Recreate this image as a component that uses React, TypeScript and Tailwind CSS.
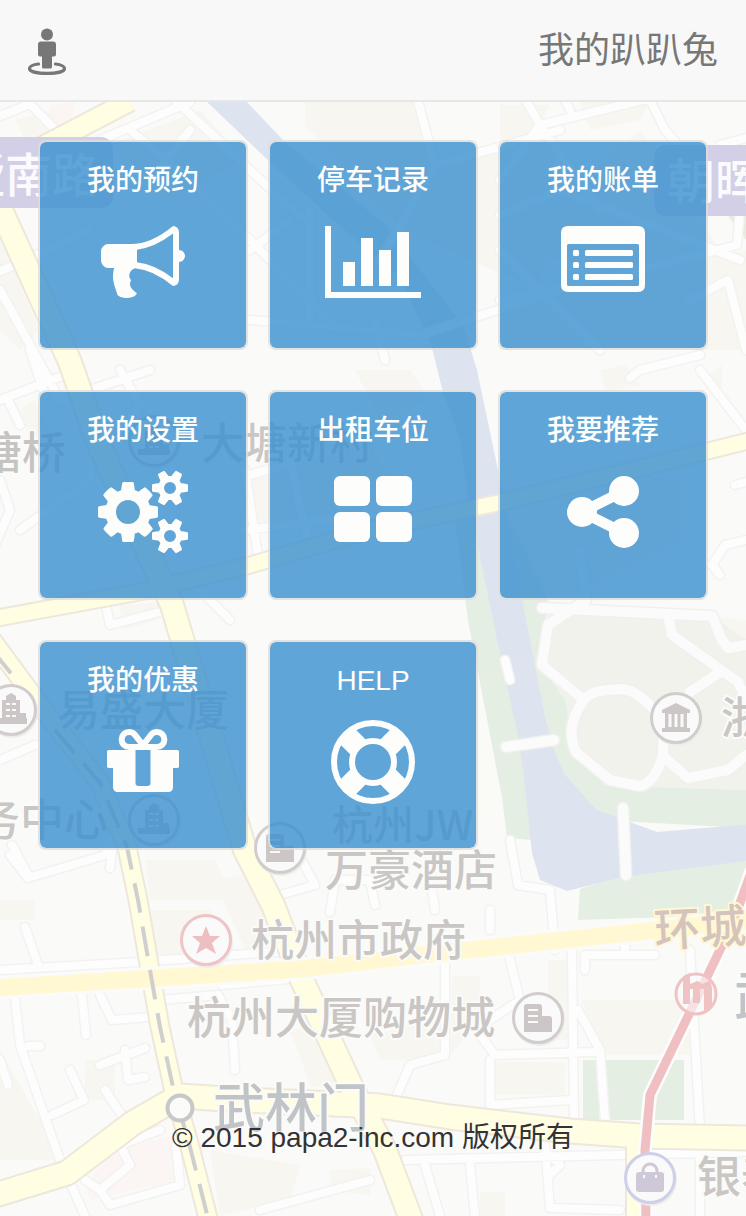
import type { ReactNode } from "react";

type Label = { x: number; y: number; text: string; size?: number; fill?: string; halo?: string; rotate?: number };

const minorRoads = [
  "M-10 120L30 104M30 104L75 150M100 140L190 102M130 130L190 180L340 330",
  "M150 180L190 130M175 100L250 170L310 225M250 250L290 220",
  "M415 90L435 165L560 130M435 165L380 260",
  "M500 180L540 125L746 75M540 125L600 210M520 90L540 125M560 90L570 110M650 100L665 130L700 170L740 210L737 245L640 270L500 300",
  "M500 215L560 190L740 260M690 300L728 280L746 350M500 250L600 350",
  "M720 145L746 138M720 160L728 180",
  "M-10 275L15 265L90 230M0 290L60 400L150 370M0 400L65 375",
  "M30 350L45 395M8 400L20 425M120 370L140 405L120 430",
  "M250 320L420 335L560 290M310 210L310 320M375 320L385 360",
  "M0 480L10 510L-5 545M20 530L90 480L95 440",
  "M250 475L400 430M245 470L258 555M290 460L310 550M245 530L370 515",
  "M630 378L640 370L700 355M700 370L746 430M735 485L746 482M720 575L712 565L725 545L746 540",
  "M105 600L110 625L160 612M200 590L230 620",
  "M0 760L35 745M10 855L28 878L105 855L115 830M12 845L28 875M112 850L110 868",
  "M0 970L140 962L300 950M25 927L38 965M15 998L20 1045L60 1160L85 1216",
  "M82 995L86 1035M100 995L112 1020L150 1017M28 1046L40 1046M0 1060L8 1085",
  "M52 1115L84 1100L70 1070M125 1120L105 1090M100 1065L145 1048M145 1077L128 1080L125 1050",
  "M85 1180L100 1190L130 1165L120 1145L160 1130M100 1190L110 1205L180 1185L176 1145",
  "M235 1070L232 1020L218 995L160 1000M260 1210L370 1180M222 985L300 978",
  "M286 830L315 885L280 895M330 912L335 880L370 880L375 905M430 875L435 910",
  "M490 910L490 930M510 840L518 885L550 890L555 950",
  "M445 960L445 1055L410 1065L397 1095M510 960L520 1000L490 1020",
  "M480 1035L495 1055L595 1052M572 950L574 1120M578 1010L600 1050L605 1120",
  "M585 970L585 955L655 955M625 945L625 955M490 1060L490 1105L570 1100M690 950L700 1130L700 1216",
  "M405 1160L746 1152M425 1165L440 1216M470 1165L475 1216M545 1145L550 1208L620 1210M550 1155L560 1165L550 1175",
  "M505 660L510 680",
];

const parkRoads = [
  "M542 608L712 616L722 640L728 648L746 645M580 550L586 600L548 625L542 665L584 700",
  "M584 700C592 690 605 690 622 689C636 690 650 703 664 722L663 755C657 775 650 784 640 786L610 780L576 752C570 738 568 722 584 700Z",
  "M668 615L672 635L738 682L746 700M722 671L690 692M664 757L688 778L728 770L746 755",
  "M506 747L554 740M623 808L626 875",
];

const yellowRoads = [
  { d: "M40 148L130 101", w: 19 },
  { d: "M-8 190L70 362L97 440L172 605L245 850L273 905L302 980L353 1090L385 1150L412 1222", w: 22 },
  { d: "M-8 640L40 705L100 783L127 847L138 900L150 970L160 1027L173 1087L190 1147L209 1222", w: 17 },
  { d: "M-8 619L150 590L250 565L370 530L498 503L620 473L752 440", w: 15 },
  { d: "M-8 1196L67 1173L133 1123L180 1096L240 1100L380 1106L450 1117L570 1131L640 1136L752 1138", w: 23 },
  { d: "M635 1136L635 1222", w: 16 },
];

const blocks = [
  "M15 120L70 105L75 130L30 150Z M305 90H420L435 165L560 120L540 290L400 230L305 125Z",
  "M110 145L200 110L245 160L170 200Z M500 105H550L520 160L500 165Z M580 100H650L640 120L590 130Z",
  "M0 240L40 330L20 350L0 330Z M600 60H746V90Z M640 130L720 250L640 275L500 250Z M500 305L746 250V350H500Z",
  "M20 410L35 400L50 430L30 440Z M250 480L370 440L400 500L250 535Z M355 370H410L430 400L380 420Z",
  "M120 605L160 602L158 620L122 630Z M540 600L746 620V790L650 788L590 775L545 680Z",
  "M600 370L625 365L640 385L605 392Z M700 380L722 365V400Z M500 500L600 465L680 480V540L560 600L510 570Z",
  "M0 900H35V920H0Z M150 910H210L240 960H155Z M145 860H215L235 900H150Z M215 880L260 870L290 950H245Z",
  "M85 1060H115V1100H85Z M0 1050L40 1120L60 1160H0Z M290 1030L320 1025L350 1095L310 1085Z",
  "M210 1150L300 1165L290 1200L220 1216Z M330 1170L370 1168V1195L330 1190Z",
  "M452 976H480V1020L450 1055Z M495 1062H565V1095H492Z M582 1000H690V1055H600Z M370 1035L440 1020V1060H380Z",
  "M480 1192H505V1216H480Z M548 960H570V1040H548Z",
];

const labels: Label[] = [
  { x: -42, y: 192, text: "墅南路", size: 47, fill: "#fbfbfe", halo: "#d2cfe7" },
  { x: 667, y: 199, text: "朝晖", size: 48, fill: "#fbfbfe", halo: "#d2cfe7" },
  { x: -22, y: 469, text: "塘桥", fill: "#c5c4c3" },
  { x: 201, y: 459, text: "大塘新村", size: 43 },
  { x: 57, y: 726, text: "易盛大厦", size: 43 },
  { x: -24, y: 836, text: "务中心" },
  { x: 332, y: 840, text: "杭州JW", size: 41 },
  { x: 325, y: 886, text: "万豪酒店", size: 43 },
  { x: 721, y: 734, text: "浙江" },
  { x: 251, y: 956, text: "杭州市政府", size: 43 },
  { x: 187, y: 1034, text: "杭州大厦购物城" },
  { x: 213, y: 1127, text: "武林门", size: 52, fill: "#c1c4c6" },
  { x: 734, y: 1015, text: "武林", size: 52, fill: "#c1c4c6" },
  { x: 697, y: 1193, text: "银泰" },
  { x: 655, y: 947, text: "环城", size: 46, fill: "#d5c4bd", halo: "#fff8d2", rotate: -3 },
];

function Poi({ x, y, stroke = "#d2cdcd", children }: { x: number; y: number; stroke?: string; children: ReactNode }) {
  return (
    <g transform={`translate(${x} ${y})`} fill="#ccc7c6">
      <circle cx="1" cy="2" r="26" fill="#ededec" />
      <circle r="24.500" fill="#fafafa" stroke={stroke} strokeWidth="3" />
      {children}
    </g>
  );
}

function Tower() {
  return (
    <>
      <path d="M-16 14V8H-9V-10H-5V-14L0-17L5-14V-10H9V3H15V8H16V14Z" />
      <path d="M-5-6H-1M1-6H5M-5 0H-1M1 0H5M-5 6H-1M1 6H5" stroke="#fafafa" strokeWidth="2" />
    </>
  );
}

function Shop() {
  return (
    <>
      <path d="M-14 14V-11Q-14-14-11-14H1Q4-14 4-11V-2H11Q14-2 14 1V14Z" />
      <path d="M-10-8H0M-10-2H0M-10 4H0" stroke="#fafafa" strokeWidth="2" />
    </>
  );
}

function CityMap() {
  return (
    <svg
      aria-hidden="true"
      className="absolute inset-0 -z-10 h-full w-full"
      viewBox="0 0 746 1216"
      preserveAspectRatio="xMidYMin slice"
      fill="none"
      strokeLinejoin="round"
    >
      <rect width="746" height="1216" fill="#fafaf8" />
      <path d={blocks.join(" ")} fill="#f7f6f1" />
      <path d="M548 608L712 616L746 640V790L650 787L590 770L545 680Z" fill="#f2f2ec" />
      <path d="M115 1150L175 1135L178 1180L90 1200L85 1185Z M50 105L75 102L70 125L55 128Z" fill="#fbf5f4" />
      <path d="M250 700L470 650L500 800L480 820L250 790Z" fill="#fafaf7" />
      <path
        d="M453 505L468 620L502 797L507 838L532 840L600 820L746 828V790L650 787L605 785L572 740L565 700L540 665L548 600L515 530L500 500Z M580 889L578 920L730 915L746 890V856L640 870Z M583 1060H684V1120H583Z"
        fill="#e5eee3"
      />
      <path d="M720 205L746 215V240L735 225Z" fill="#e8ebde" />
      <path
        d="M205 100H245L283 140L383 223L463 325L477 370L498 470L510 530L526 620L545 717L555 753L565 775L597 810L657 832L752 824V860L623 877L567 891L540 880L532 853L523 770L518 737L497 640L467 493L460 440L443 392L432 348L400 277L333 220L270 162Z"
        fill="#dde4f0"
      />
      <g strokeLinecap="round">
        <path d={minorRoads.join("")} stroke="#f2f2f1" strokeWidth="11" />
        <path d={minorRoads.join("")} stroke="#fdfdfd" strokeWidth="8" />
        <path d={parkRoads.join("")} stroke="#f0f0ee" strokeWidth="13" />
        <path d={parkRoads.join("")} stroke="#fbfbfb" strokeWidth="10" />
      </g>
      {yellowRoads.map((r) => (
        <path key={r.d} d={r.d} stroke="#eee7dc" strokeWidth={r.w + 4} />
      ))}
      {yellowRoads.map((r) => (
        <path key={r.d} d={r.d} stroke="#fffde2" strokeWidth={r.w} />
      ))}
      <path d="M-8 988L140 979L300 969L420 955L657 930L752 920" stroke="#fbfbf9" strokeWidth="23" />
      <path d="M-8 988L140 979L300 969L420 955L657 930L752 920" stroke="#fff8d2" strokeWidth="17" />
      <path
        d="M-8 650L18 682M55 730L100 783L127 847L138 900L150 970L160 1027L173 1087L190 1147L209 1222"
        stroke="#cfcfd0"
        strokeWidth="4"
        strokeDasharray="30 14"
      />
      <path d="M752 870L732 925L650 1095L645 1150L646 1222" stroke="#fdfdfd" strokeWidth="14" />
      <path d="M752 870L732 925L650 1095L645 1150L646 1222" stroke="#f0bfc2" strokeWidth="9" />
      <rect x="-20" y="137" width="133" height="71" rx="12" fill="#d2cfe7" />
      <rect x="654" y="145" width="120" height="71" rx="12" fill="#d2cfe7" />
      <circle cx="180" cy="1108" r="12.500" fill="#fbfbfa" stroke="#c6c8c9" strokeWidth="4" />

      <Poi x={11} y={710}><Tower /></Poi>
      <Poi x={154} y={820}><Tower /></Poi>
      <Poi x={154} y={441}><Tower /></Poi>
      <Poi x={280} y={848}><Shop /></Poi>
      <Poi x={538} y={1018}><Shop /></Poi>
      <Poi x={676} y={718}>
        <path d="M-14-8L0-15L14-8V-5H11V10H14V14H-14V10H-11V-5H-14Z" />
        <path d="M-6-4V9M0-4V9M6-4V9" stroke="#fafafa" strokeWidth="3" />
      </Poi>
      <Poi x={206} y={940} stroke="#eec4c6">
        <path d="M0-14L4-4H14L6 3L10 14L0 8L-10 14L-6 3L-14-4H-4Z" fill="#edbfc2" />
      </Poi>
      <Poi x={650} y={1178} stroke="#cdd0e8">
        <rect x="-14" y="-6" width="28" height="20" rx="3" fill="#cec8d8" />
        <path d="M-7-5V-7A7 7 0 0 1 7-7V-5" fill="none" stroke="#cec8d8" strokeWidth="3" />
        <path d="M-6-3V0M6-3V0" stroke="#fafafa" strokeWidth="2" />
      </Poi>
      <circle cx="696" cy="994" r="20" fill="#fafafa" fillOpacity="0.6" stroke="#efc2c4" strokeWidth="3" />
      <path d="M683 976L690 973V984L698 981L702 984L709 981Q712 983 712 990V1005L704 1013V989H700V1003H693V989H690V1004H683Z" fill="#efc2c4" />

      <g fontFamily='"Noto Sans CJK SC", sans-serif' fontWeight="500" strokeWidth="4" paintOrder="stroke">
        {labels.map((l) => (
          <text
            key={`${l.x}-${l.y}`}
            x={l.x}
            y={l.y}
            fontSize={l.size ?? 44}
            fill={l.fill ?? "#c9c6c4"}
            stroke={l.halo ?? "#fbfbfa"}
            transform={l.rotate ? `rotate(${l.rotate} ${l.x} ${l.y})` : undefined}
          >
            {l.text}
          </text>
        ))}
      </g>
    </svg>
  );
}

function Glyph({ width = 1792, d }: { width?: number; d: string }) {
  return (
    <svg aria-hidden="true" className="h-[84px] w-auto" viewBox={`0 0 ${width} 1792`} fill="currentColor">
      <path d={d} />
    </svg>
  );
}

const bullhorn =
  "M1664 640q53 0 90.5 37.5t37.5 90.5-37.5 90.5-90.500 37.500v384q0 52-38 90t-90 38q-417-347-812-380-58 19-91 66t-31 100.500 40 92.500q-20 33-23 65.500t6 58 33.500 55 48 50 61.500 50.500q-29 58-111.500 83t-168.500 11.500-132-55.500q-7-23-29.500-87.500t-32-94.500-23-89-15-101 3.500-98.500 22-110.500h-122q-66 0-113-47t-47-113v-192q0-66 47-113t113-47h480q435 0 896-384 52 0 90 38t38 90v384zm-128 604v-954q-394 302-768 343v270q377 42 768 341z";
const barChart =
  "M640 896v512h-256v-512h256zm384-512v1024h-256v-1024h256zm1024 1152v128h-2048v-1536h128v1408h1920zm-640-896v768h-256v-768h256zm384-384v1152h-256v-1152h256z";
const smallGear =
  "v140q0 16-149 31-12 27-30 52 51 113 51 138 0 4-4 7-122 71-124 71-8 0-46-47t-52-68q-20 2-30 2t-30-2q-14 21-52 68t-46 47q-2 0-124-71-4-3-4-7 0-25 51-138-18-25-30-52-149-15-149-31v-140q0-16 149-31 13-29 30-52-51-113-51-138 0-4 4-7 4-2 35-20t59-34 30-16q8 0 46 46.500t52 67.500q20-2 30-2t30 2q51-71 92-112l6-2q4 0 124 70 4 3 4 7 0 25-51 138 17 23 30 52 149 15 149 31z";
const gears =
  "M896 896q0-106-75-181t-181-75-181 75-75 181 75 181 181 75 181-75 75-181zm768 512q0-52-38-90t-90-38-90 38-38 90q0 53 37.500 90.500t90.500 37.500 90.500-37.500 37.500-90.500zm0-1024q0-52-38-90t-90-38-90 38-38 90q0 53 37.500 90.500t90.500 37.500 90.500-37.500 37.500-90.500zm-384 421v185q0 10-7 19.500t-16 10.500l-155 24q-11 35-32 76 34 48 90 115 7 11 7 20 0 12-7 19-23 30-82.500 89.500t-78.500 59.500q-11 0-21-7l-115-90q-37 19-77 31-11 108-23 155-7 24-30 24h-186q-11 0-20-7.500t-10-17.500l-23-153q-34-10-75-31l-118 89q-7 7-20 7-11 0-21-8-144-133-144-160 0-9 7-19 10-14 41-53t47-61q-23-44-35-82l-152-24q-10-1-17-9.500t-7-19.500v-185q0-10 7-19.500t16-10.500l155-24q11-35 32-76-34-48-90-115-7-11-7-20 0-12 7-20 22-30 82-89t79-59q11 0 21 7l115 90q34-18 77-32 11-108 23-154 7-24 30-24h186q11 0 20 7.500t10 17.500l23 153q34 10 75 31l118-89q8-7 20-7 11 0 21 8 144 133 144 160 0 8-7 19-12 16-42 54t-45 60q23 48 34 82l152 23q10 2 17 10.500t7 19.500z" +
  "M1920 1338" + smallGear + "M1920 314" + smallGear;
const gift =
  "M1056 1356v-716h-320v716q0 25 18 38.500t46 13.500h192q28 0 46-13.500t18-38.500zm-456-844h195l-126-161q-26-31-69-31-40 0-68 28t-28 68 28 68 68 28zm688-96q0-40-28-68t-68-28q-43 0-69 31l-125 161h194q40 0 68-28t28-68zm376 256v320q0 14-9 23t-23 9h-96v416q0 40-28 68t-68 28h-1088q-40 0-68-28t-28-68v-416h-96q-14 0-23-9t-9-23v-320q0-14 9-23t23-9h440q-93 0-158.500-65.500t-65.500-158.500 65.500-158.500 158.500-65.500q107 0 168 77l128 165 128-165q61-77 168-77 93 0 158.500 65.500t65.500 158.500-65.500 158.500-158.500 65.500h440q14 0 23 9t9 23z";

function ListIcon() {
  return (
    <svg aria-hidden="true" className="h-[84px] w-auto" viewBox="0 0 84 84" fill="currentColor">
      <path
        fillRule="evenodd"
        d="M7 6H77Q84 6 84 13V65Q84 72 77 72H7Q0 72 0 65V13Q0 6 7 6ZM7.500 24Q6 24 6 25.500V64.500Q6 66 7.500 66H76.500Q78 66 78 64.500V25.500Q78 24 76.500 24Z"
      />
      {[30, 42, 54].map((y) => (
        <g key={y}>
          <rect x="12" y={y} width="6" height="6" rx="1.500" />
          <rect x="24" y={y} width="48" height="6" rx="1.500" />
        </g>
      ))}
    </svg>
  );
}

function TilesIcon() {
  return (
    <svg aria-hidden="true" className="h-[84px] w-auto" viewBox="0 0 84 84" fill="currentColor">
      <rect x="3" y="6" width="36" height="30" rx="6" />
      <rect x="45" y="6" width="36" height="30" rx="6" />
      <rect x="3" y="42" width="36" height="30" rx="6" />
      <rect x="45" y="42" width="36" height="30" rx="6" />
    </svg>
  );
}

function ShareIcon() {
  return (
    <svg aria-hidden="true" className="h-[84px] w-auto" viewBox="0 0 84 84" fill="currentColor">
      <path d="M63 21L21 42L63 63" fill="none" stroke="currentColor" strokeWidth="10.500" />
      <circle cx="21" cy="42" r="15" />
      <circle cx="63" cy="21" r="15" />
      <circle cx="63" cy="63" r="15" />
    </svg>
  );
}

function LifeRingIcon() {
  return (
    <svg aria-hidden="true" className="h-[84px] w-auto" viewBox="0 0 84 84" fill="none" stroke="currentColor">
      <circle cx="42" cy="42" r="39" strokeWidth="6" />
      <circle cx="42" cy="42" r="21" strokeWidth="6" />
      <path d="M27 27L15 15M57 27L69 15M27 57L15 69M57 57L69 69" strokeWidth="21.500" />
    </svg>
  );
}

function StreetViewIcon() {
  return (
    <svg aria-hidden="true" className="h-[48px] w-auto" viewBox="0 0 38 48" fill="currentColor">
      <circle cx="19" cy="7.500" r="6" />
      <path d="M13 14.500H25Q28 14.500 28 17.500V27.500Q28 29.500 26 29.500H24V40Q24 41.500 22.500 41.500H15.500Q14 41.500 14 40V29.500H12Q10 29.500 10 27.500V17.500Q10 14.500 13 14.500Z" />
      <path
        d="M10.500 37C5 37.800 1.500 39.300 1.500 41.500C1.500 44.500 9.500 46.300 19 46.300S36.500 44.500 36.500 41.500C36.500 39.300 33 37.800 27.500 37"
        fill="none"
        stroke="currentColor"
        strokeWidth="3.200"
        strokeLinecap="round"
      />
    </svg>
  );
}

const tiles: { label: string; icon: ReactNode }[] = [
  { label: "我的预约", icon: <Glyph d={bullhorn} /> },
  { label: "停车记录", icon: <Glyph width={2048} d={barChart} /> },
  { label: "我的账单", icon: <ListIcon /> },
  { label: "我的设置", icon: <Glyph width={1920} d={gears} /> },
  { label: "出租车位", icon: <TilesIcon /> },
  { label: "我要推荐", icon: <ShareIcon /> },
  { label: "我的优惠", icon: <Glyph d={gift} /> },
  { label: "HELP", icon: <LifeRingIcon /> },
];

export default function App() {
  return (
    <div className="relative isolate flex min-h-screen flex-col overflow-hidden font-['Liberation_Sans','Noto_Sans_CJK_SC',sans-serif]">
      <CityMap />
      <header className="flex items-center justify-between border-b-2 border-[#e7e7e7] bg-[#f8f8f8] px-7 pt-[26px] pb-6 text-[#777]">
        <a href="#location" aria-label="Location">
          <StreetViewIcon />
        </a>
        <h1 className="text-[36px] leading-[50px]">我的趴趴兔</h1>
      </header>
      <main className="px-[38px] pt-[38px]">
        <nav className="grid grid-cols-3 gap-x-5 gap-y-10">
          {tiles.map((tile) => (
            <a
              key={tile.label}
              href="#menu"
              className="flex aspect-square flex-col items-center gap-[19px] rounded-lg border-2 border-[#ddd]/80 bg-[#3990d0]/80 bg-clip-padding pt-[19px] text-[28px] leading-10 font-medium text-[#fdfdfc]"
            >
              <span>{tile.label}</span>
              {tile.icon}
            </a>
          ))}
        </nav>
      </main>
      <footer className="mt-auto pt-10 pb-[58px] text-center text-[28px] leading-10 text-[#333]">
        © 2015 papa2-inc.com 版权所有
      </footer>
    </div>
  );
}
